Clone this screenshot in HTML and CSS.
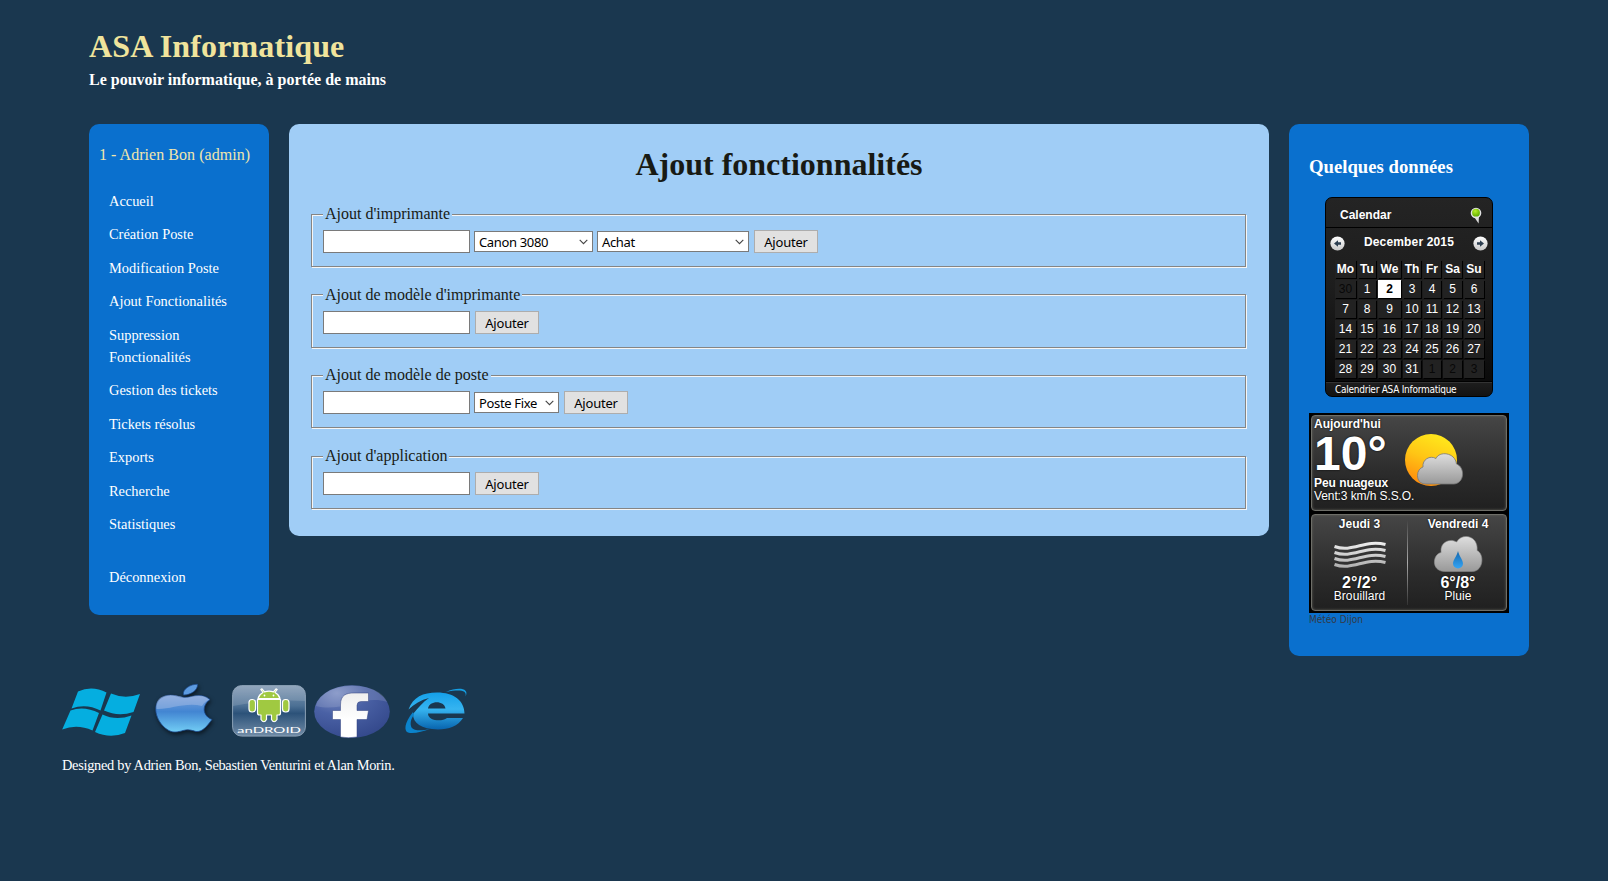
FILE: index.html
```html
<!DOCTYPE html>
<html lang="fr">
<head>
<meta charset="utf-8">
<title>ASA Informatique</title>
<link rel="stylesheet" href="styles.css">
</head>
<body>
<header class="site-header">
  <h1 class="brand">ASA Informatique</h1>
  <p class="tagline">Le pouvoir informatique, à portée de mains</p>
</header>
<div class="columns">
  <nav class="sidebar">
    <p class="user">1 - Adrien Bon (admin)</p>
    <ul class="menu">
      <li><a>Accueil</a></li>
      <li><a>Création Poste</a></li>
      <li><a>Modification Poste</a></li>
      <li><a>Ajout Fonctionalités</a></li>
      <li><a>Suppression<br>Fonctionalités</a></li>
      <li><a>Gestion des tickets</a></li>
      <li><a>Tickets résolus</a></li>
      <li><a>Exports</a></li>
      <li><a>Recherche</a></li>
      <li><a>Statistiques</a></li>
      <li class="logout"><a>Déconnexion</a></li>
    </ul>
  </nav>
  <main class="content">
    <h2 class="page-title">Ajout fonctionnalités</h2>
    <fieldset class="group">
      <legend>Ajout d'imprimante</legend>
      <div class="row">
        <input class="field" type="text">
        <div class="select select-model">Canon 3080<svg class="chevron" viewBox="0 0 9 6"><path d="M.7.8 4.5 4.6 8.3.8"/></svg></div>
        <div class="select select-mode">Achat<svg class="chevron" viewBox="0 0 9 6"><path d="M.7.8 4.5 4.6 8.3.8"/></svg></div>
        <button class="btn">Ajouter</button>
      </div>
    </fieldset>
    <fieldset class="group">
      <legend>Ajout de modèle d'imprimante</legend>
      <div class="row">
        <input class="field" type="text">
        <button class="btn">Ajouter</button>
      </div>
    </fieldset>
    <fieldset class="group">
      <legend>Ajout de modèle de poste</legend>
      <div class="row">
        <input class="field" type="text">
        <div class="select select-type">Poste Fixe<svg class="chevron" viewBox="0 0 9 6"><path d="M.7.8 4.5 4.6 8.3.8"/></svg></div>
        <button class="btn">Ajouter</button>
      </div>
    </fieldset>
    <fieldset class="group">
      <legend>Ajout d'application</legend>
      <div class="row">
        <input class="field" type="text">
        <button class="btn">Ajouter</button>
      </div>
    </fieldset>
  </main>
  <aside class="aside">
    <h3 class="aside-title">Quelques données</h3>
    <section class="calendar">
      <div class="cal-head">Calendar
        <svg class="pin" viewBox="0 0 14 18">
          <defs><radialGradient id="pinFill" cx=".4" cy=".3" r=".7"><stop offset="0" stop-color="#b9ee2a"/><stop offset="1" stop-color="#5fae00"/></radialGradient></defs>
          <path d="M3.5 9 8.600 16.500 9 8.500z" fill="#ddd"/><circle cx="6" cy="6" r="5.300" fill="#e2e2e2"/><circle cx="6" cy="5.7" r="3.9" fill="url(#pinFill)"/>
        </svg>
      </div>
      <div class="cal-month">
        <svg class="arrow" viewBox="0 0 15 15"><circle cx="7.5" cy="7.5" r="7.1" fill="url(#knob)"/><path d="M4 7.5 8 4.3V6.3h3v2.4H8v2z" fill="#2c3e50"/>
          <defs><linearGradient id="knob" x2="0" y2="1"><stop offset="0" stop-color="#fff"/><stop offset="1" stop-color="#c8c8c8"/></linearGradient></defs></svg>
        <span>December 2015</span>
        <svg class="arrow" viewBox="0 0 15 15"><circle cx="7.5" cy="7.5" r="7.1" fill="url(#knob)"/><path d="M11 7.5 7 4.3V6.3H4v2.4h3v2z" fill="#2c3e50"/></svg>
      </div>
      <div class="cal-grid">
        <b>Mo</b><b>Tu</b><b>We</b><b>Th</b><b>Fr</b><b>Sa</b><b>Su</b>
        <i class="off">30</i><i>1</i><i class="today">2</i><i>3</i><i>4</i><i>5</i><i>6</i>
        <i>7</i><i>8</i><i>9</i><i>10</i><i>11</i><i>12</i><i>13</i>
        <i>14</i><i>15</i><i>16</i><i>17</i><i>18</i><i>19</i><i>20</i>
        <i>21</i><i>22</i><i>23</i><i>24</i><i>25</i><i>26</i><i>27</i>
        <i>28</i><i>29</i><i>30</i><i>31</i><i class="off">1</i><i class="off">2</i><i class="off">3</i>
      </div>
      <div class="cal-foot">Calendrier ASA Informatique</div>
    </section>
    <section class="weather">
      <div class="today-panel">
        <div class="now">
          <div class="w-day">Aujourd'hui</div>
          <div class="w-temp">10°</div>
          <div class="w-desc">Peu nuageux</div>
          <div class="w-wind">Vent:3 km/h S.S.O.</div>
        </div>
        <svg class="w-sun" viewBox="0 0 60 54">
          <defs>
            <linearGradient id="sun" x1=".7" y1="0" x2=".3" y2="1"><stop offset="0" stop-color="#ffea1c"/><stop offset=".5" stop-color="#ffc515"/><stop offset="1" stop-color="#ff8a0c"/></linearGradient>
            <linearGradient id="cloud" x2="0" y2="1"><stop offset="0" stop-color="#dedede"/><stop offset="1" stop-color="#999"/></linearGradient>
          </defs>
          <circle cx="27" cy="27" r="26" fill="url(#sun)"/>
          <path d="M22 51C16 51 13.500 47 13.500 42.500S16 35 19 34C18 26.500 26 22 32 25.500 35 18 51 19 52.500 31 61 34 61 50 50 51z" fill="url(#cloud)" stroke="#777" stroke-width=".8"/>
        </svg>
      </div>
      <div class="next-panel">
        <div class="forecast">
          <div class="f-day">Jeudi 3</div>
          <svg class="f-icon" viewBox="0 0 54 40" fill="none" stroke="url(#mist)" stroke-width="3">
            <defs><linearGradient id="mist" x1="0" y1="6" x2="0" y2="34" gradientUnits="userSpaceOnUse"><stop offset="0" stop-color="#f2f2f2"/><stop offset="1" stop-color="#aaa"/></linearGradient></defs>
            <path d="M1.500 11.500C20 18 32 4 52.500 9.500M1.500 17.500C20 24 32 10 52.500 15.500M1.500 23.500C20 30 32 16 52.500 21.500M1.500 29.500C20 36 32 22 52.500 27.500"/>
          </svg>
          <div class="f-temp">2°/2°</div>
          <div class="f-desc">Brouillard</div>
        </div>
        <div class="divider"></div>
        <div class="forecast forecast-last">
          <div class="f-day">Vendredi 4</div>
          <svg class="f-icon" viewBox="0 0 54 40">
            <defs><linearGradient id="drop" x2="0" y2="1"><stop offset="0" stop-color="#1467ad"/><stop offset="1" stop-color="#35a5f5"/></linearGradient></defs>
            <path d="M13 37.500C-1 37 1 20 9.500 18.500 8 7.500 19 4 25 8 31-2 47 2 45.500 16.500 53 20 52 37 41 37.500z" transform="translate(.6 -1)" fill="url(#cloud)" stroke="#8a8a8a" stroke-width=".6"/>
            <path d="M27 16C28 21 32 25 32 28.500A5 5 0 0 1 22 28.500C22 25 26 21 27 16z" fill="url(#drop)"/>
          </svg>
          <div class="f-temp">6°/8°</div>
          <div class="f-desc">Pluie</div>
        </div>
      </div>
    </section>
    <div class="w-link">Météo Dijon</div>
  </aside>
</div>
<footer class="site-footer">
  <div class="logos">
    <svg class="logo-win" viewBox="0 0 78 48" fill="#05aee0">
      <path d="M16 3.500Q30-3 44.500 4.500L38.500 22.500Q24 15 9.500 20.500zM49 5.500Q63 11.500 78 6L71.500 24Q56 29 42 22.500zM8.500 22.500Q22 17.500 37 25L30.500 42.500Q15 35.500.200 41.500zM40.500 26.500Q54 33 69.500 27.500L63 45Q48 51 33 44z"/>
    </svg>
    <svg class="logo-apple" viewBox="0 0 58 50">
      <defs><linearGradient id="apple" x2="0" y2="1"><stop offset="0" stop-color="#7ba1dc"/><stop offset=".45" stop-color="#4285d2"/><stop offset="1" stop-color="#72cef5"/></linearGradient></defs>
      <path d="M29 13.500C36 14 45 7.500 55 15.500 46 22 48 32 57 35.500 52 42 48 48 41 47.500 36 46 33 45 28 46.500 20 49 15 49 8 42-2 31-2 16 10 12 18 9.500 23 13 29 13.500z" fill="url(#apple)" stroke="#1c4a8e" stroke-width=".8"/>
      <path d="M1.500 25C-1 9 18 9 29 13.500 36 14 45 7.500 54 15.500 49 18 48 21 47 22 30 18 14 26 1.500 25z" fill="#bac9e8" opacity=".4"/>
      <path d="M28.500 11C27 5 36 0 42.500.300 43 6 36 11 28.500 11z" fill="#5d9be0" stroke="#1c4a8e" stroke-width=".7"/>
    </svg>
    <svg class="logo-android" viewBox="0 0 74 52">
      <defs><linearGradient id="plate" x2="0" y2="1"><stop offset="0" stop-color="#8098b3"/><stop offset=".4" stop-color="#4c7094"/><stop offset=".55" stop-color="#2c5279"/><stop offset="1" stop-color="#718ca7"/></linearGradient></defs>
      <rect x=".6" y=".6" width="72.800" height="50.500" rx="9" fill="url(#plate)" stroke="#8ba0b6"/>
      <path d="M1 21V10Q1 1 10 1H64Q73 1 73 10V16Q40 14 1 21z" fill="#fff" opacity=".14"/>
      <g fill="#a0c941" stroke="#fff" stroke-width="1.200" stroke-linejoin="round">
        <path d="M26 13.500C27 10 29 8.500 31 7.500L28.800 4.500 30 3.800 32.500 6.800Q37 5.500 41.500 6.800L44 3.800 45.200 4.500 43 7.500C45 8.500 47 10 48 13.500z"/>
        <path d="M25.500 14.500H48.500V28Q48.500 30 46.500 30H45V34.500Q42 39 39.500 34.500V30H34.500V34.500Q32 39 29 34.500V30H27.500Q25.500 30 25.500 28z"/>
        <rect x="17" y="14.500" width="6.500" height="12.500" rx="3"/><rect x="50.500" y="14.500" width="6.500" height="12.500" rx="3"/>
      </g>
      <circle cx="32.500" cy="10.500" r=".9" fill="#fff"/><circle cx="41.500" cy="10.500" r=".9" fill="#fff"/>
      <text x="5" y="47.800" textLength="64" lengthAdjust="spacingAndGlyphs" class="droid-text">anDROID</text>
    </svg>
    <svg class="logo-fb" viewBox="0 0 76 53">
      <defs><radialGradient id="fb" cx=".3" cy=".15" r=".9"><stop offset="0" stop-color="#7d8fc3"/><stop offset=".45" stop-color="#4a61a5"/><stop offset="1" stop-color="#34498c"/></radialGradient>
      <linearGradient id="fbf" x2="0" y2="1"><stop offset="0" stop-color="#eee"/><stop offset=".6" stop-color="#fff"/></linearGradient></defs>
      <ellipse cx="38" cy="26.500" rx="37.800" ry="26.200" fill="url(#fb)"/>
      <path d="M2 21C8-5 66-5 73 17 50 9 28 28 2 21z" fill="#fff" opacity=".13"/>
      <path d="M26.500 52V34.500H18.500V25.500H26.500V20C26.500 10 32 8 40 8H54.500V16.500H47Q43 16.500 43 20.500V25.500H54.500L53 34.500H43V52Q34 53.500 26.500 52z" fill="url(#fbf)" stroke="#2c3f7c" stroke-width=".5"/>
    </svg>
    <svg class="logo-ie" viewBox="0 0 62 46">
      <defs><linearGradient id="ie" x2="0" y2="1"><stop offset="0" stop-color="#14a0ea"/><stop offset=".45" stop-color="#36b4f0"/><stop offset="1" stop-color="#0864ae"/></linearGradient></defs>
      <path fill="url(#ie)" fill-rule="evenodd" d="M3.500 21.500C8 9 18 4.500 32 4.500 49 4.500 59.500 13 59.500 25.500H23C23 33 37 34 42 30H58C53 38 44 41.500 33 41.500 16 41 8 35 8 26 13 20 18 14 24 10 16 12 9 16 3.500 21.500zM23 20.500H40.500C39.500 12 24 12 23 20.500z"/>
      <path d="M41 4C53-1.500 65 .200 60.500 8.500 62.500 2 54 1.500 41 4z" fill="#159fe4"/>
      <path d="M8 24C-1 35-1 43 3 44.500 8 46 17 44 25 41 17 43 9 43 6.500 39.500 5 36 5.500 31 9 27z" fill="#0b83cc"/>
    </svg>
  </div>
  <p class="credits">Designed by Adrien Bon, Sebastien Venturini et Alan Morin.</p>
</footer>
</body>
</html>
```
FILE: styles.css
```css
* { box-sizing: border-box; }
html { height: 100%; }
body {
  margin: 0;
  min-height: 100%;
  background: #1a374f;
  font: 16px/22px "Liberation Serif", "Times New Roman", serif;
  color: #181a14;
}
p, h1, h2, h3, ul { margin: 0; padding: 0; }
svg { display: block; overflow: visible; }

.site-header { padding: 27px 0 0 89px; height: 124px; }
.brand { font-size: 32px; line-height: 38px; letter-spacing: .13px; color: #f0e49c; }
.tagline { margin-top: 4px; font-weight: bold; color: #fff; }

.columns { display: flex; align-items: flex-start; gap: 20px; padding-left: 89px; height: 558px; }

.sidebar { width: 180px; height: 491px; border-radius: 10px; background: #0a70ce; padding: 20px 10px; }
.user { color: #f0e6ac; white-space: nowrap; letter-spacing: .04px; }
.menu { list-style: none; margin: 24px 0 0 10px; font-size: 14.400px; color: #fff; }
.menu li { margin-bottom: 11.450px; }
.menu .logout { margin-top: 31.500px; }

.content { width: 980px; height: 412px; border-radius: 10px; background: #a0cdf6; padding: 20px; }
.page-title { font-size: 32px; line-height: 40px; text-align: center; }
.group {
  margin: 0 3px 15.700px 2px;
  height: 65px;
  padding: 0 11px;
  border: 1px solid #858585;
  box-shadow: 1px 1px 0 #f6f6f6, inset 1px 1px 0 #f6f6f6;
  min-width: 0;
}
.page-title + .group { margin-top: 18px; }
.group legend { padding: 0 2px; line-height: 24px; background: #a0cdf6; }
.row { display: flex; align-items: center; height: 23px; margin-top: 4px; }
.field { width: 147px; height: 23px; border: 1px solid #7a7a7a; background: #fff; padding: 0; margin: 0; }
.select, .btn { font: 13px/19px "Noto Sans", "Open Sans", sans-serif; letter-spacing: -.35px; color: #000; }
.select {
  display: flex; justify-content: space-between; align-items: center;
  height: 21px; margin-left: 4px; padding: 2px 4px 0 4px;
  border: 1px solid #7a7a7a; background: #fff; white-space: nowrap;
}
.select-model { width: 119px; }
.select-mode { width: 152px; }
.select-type { width: 85px; }
.chevron { width: 9px; height: 6px; margin-top: -2px; fill: none; stroke: #444; stroke-width: 1.100; }
.btn { width: 64px; height: 23px; margin: 0 0 0 5px; padding: 2px 0 0; border: 1px solid #adadad; background: #e1e1e1; letter-spacing: -.2px; }

.aside { width: 240px; height: 532px; border-radius: 10px; background: #0a70ce; padding: 32px 20px 0; }
.aside-title { font-size: 18.720px; line-height: 22px; color: #fff; }

.calendar {
  width: 168px; height: 200px; margin: 19px 0 0 16px;
  border: 1px solid #000; border-radius: 7px;
  background: linear-gradient(#242424, #1d1d1d 45%, #080808);
  font: 12px/18px "Liberation Sans", Arial, sans-serif; color: #fff;
  overflow: hidden;
}
.cal-head { display: flex; justify-content: space-between; height: 30px; padding: 8px 8px 0 14px; border-bottom: 1px solid #000; font-weight: bold; }
.pin { width: 14px; height: 18px; margin-top: 1px; }
.cal-month { display: flex; justify-content: space-between; height: 32px; padding: 5px 4px 0; font-weight: bold; letter-spacing: .15px; }
.arrow { width: 15px; height: 15px; margin-top: 3px; }
.cal-grid {
  display: grid; grid-template-columns: 21px 18px 23px 18px 18px 19px 20px;
  grid-auto-rows: 18px; gap: 2px; margin-left: 9px; width: 149px; text-align: center;
}
.cal-grid > * { background: #222; font-style: normal; line-height: 19px; box-shadow: 1px 1px 0 #000; }
.cal-grid .off { color: #080808; }
.cal-grid .today { background: #fff; color: #000; font-weight: bold; }
.cal-foot { margin-top: 3px; height: 18px; border-top: 1px solid #000; box-shadow: inset 0 1px #333; background: linear-gradient(#1e1e1e, #101010); padding-left: 9px; font: 10px/16px "DejaVu Sans Condensed", "DejaVu Sans", sans-serif; letter-spacing: -.26px; white-space: nowrap; }

.weather { width: 200px; height: 200px; margin-top: 16px; padding: 2px; background: #000; color: #fff; font: 12px/14px "Liberation Sans", Arial, sans-serif; }
.today-panel, .next-panel {
  display: flex; height: 96px; border-radius: 4px; border: 1px solid #6e6e68;
  background: linear-gradient(#464646, #2c2c2c 60%, #202020);
  box-shadow: inset 0 0 3px #60605a;
}
.next-panel { margin-top: 3px; height: 97px; }
.now { width: 92px; padding: 1px 0 0 2px; white-space: nowrap; text-shadow: 0 0 2px #000; }
.w-day, .w-desc { font-weight: bold; }
.w-temp { font-size: 48px; line-height: 45px; font-weight: bold; }
.w-desc { height: 13px; letter-spacing: -.05px; }
.w-wind { letter-spacing: -.1px; }
.w-sun { width: 60px; height: 54px; margin: 17px 0 0 0; }
.forecast { width: 96px; text-align: center; padding-top: 2px; text-shadow: 0 0 2px #000; }
.forecast-last { width: 99px; padding-left: 2px; }
.f-day { font-weight: bold; }
.f-icon { width: 54px; height: 40px; margin: 4px auto 0; }
.f-temp { font-size: 16px; line-height: 16px; font-weight: bold; }
.f-desc { line-height: 12px; margin-top: -1px; letter-spacing: .1px; }
.divider { width: 1px; height: 85px; margin-top: 5px; background: linear-gradient(#444, #aaa 50%, #333); }
.w-link { font: 10px/14px "DejaVu Sans Condensed", "DejaVu Sans", sans-serif; color: #343a45; }

.site-footer { padding-left: 62px; }
.logos { display: flex; align-items: flex-start; height: 60px; }
.logo-win { width: 78px; height: 48px; margin: 6px 0 0 0; }
.logo-apple { width: 58px; height: 50px; margin: 2px 0 0 15px; filter: drop-shadow(1px 2px 2px rgba(0, 0, 0, .6)); }
.logo-android { width: 74px; height: 52px; margin: 3px 0 0 19px; }
.logo-fb { width: 76px; height: 53px; margin: 3px 0 0 8px; }
.logo-ie { width: 62px; height: 46px; margin: 6px 0 0 15px; }
.droid-text { font: 8px Lato, sans-serif; fill: #fff; }
.credits { margin-top: 12px; font-size: 14.400px; letter-spacing: -.3px; color: #fff; }
```
